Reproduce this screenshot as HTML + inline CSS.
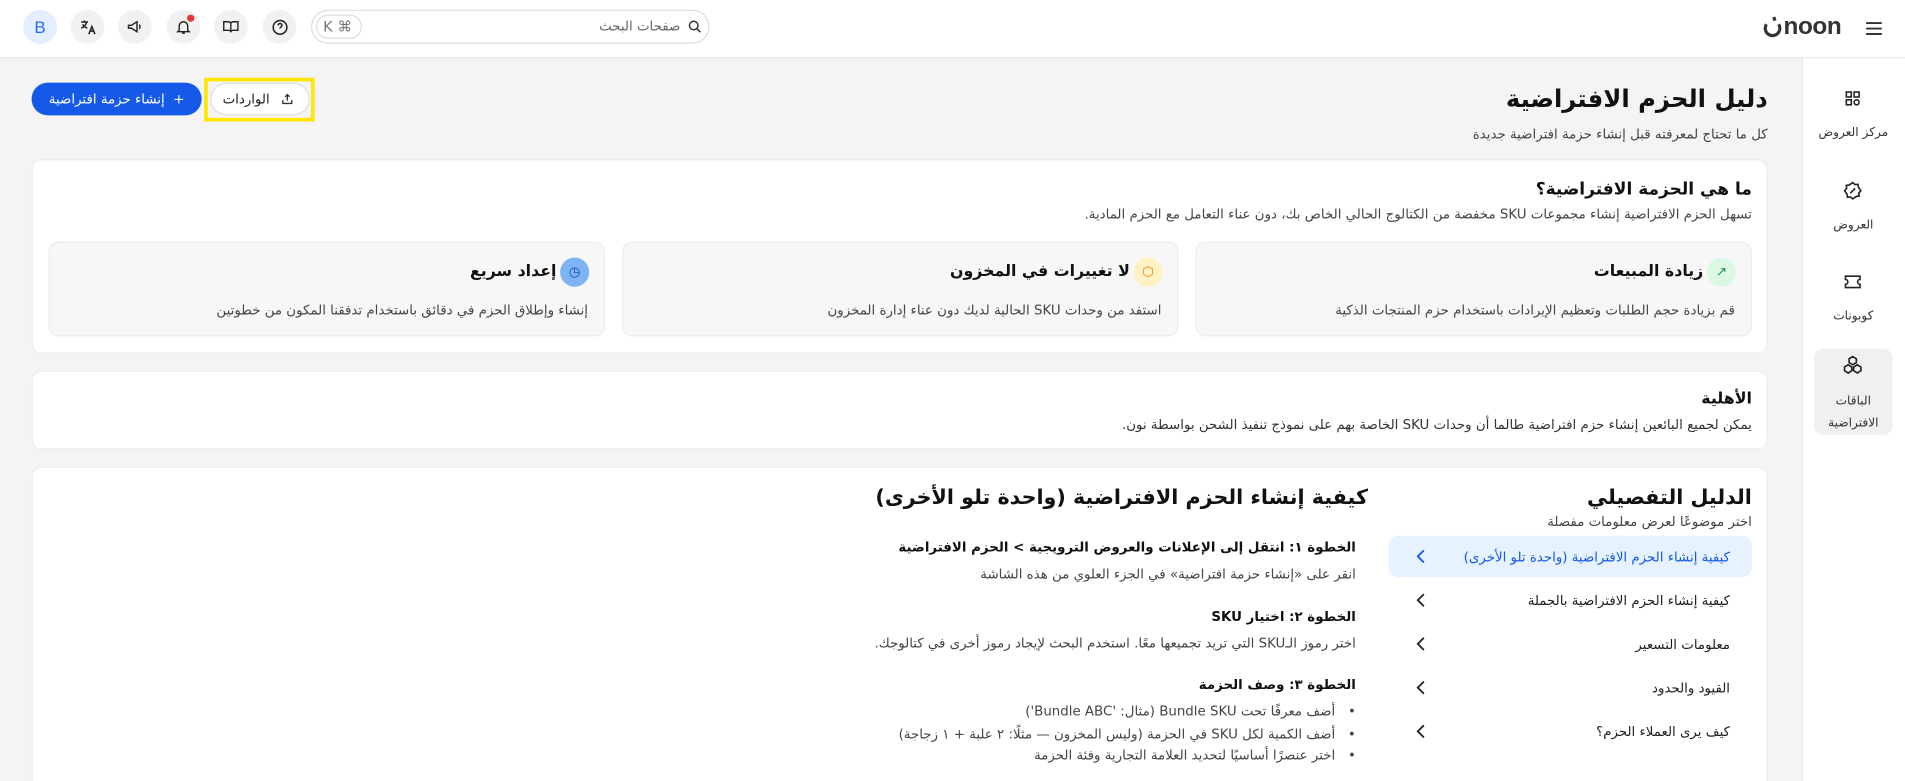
<!DOCTYPE html>
<html><head><meta charset="utf-8"><style>
*{box-sizing:border-box;margin:0;padding:0}
html,body{width:1905px;height:781px;overflow:hidden;background:#fff}
#w{width:1568px;height:643px;transform:scale(1.2149);transform-origin:0 0;position:relative;font-family:"DejaVu Sans","Liberation Sans",sans-serif;color:#1f1f1f}
.a{position:absolute}
.r{direction:rtl;text-align:right;white-space:nowrap}
.hdr{left:0;top:0;width:1568px;height:48px;background:#fff;border-bottom:1px solid #e6e6e6}
.ic{width:28px;height:28px;border-radius:50%;background:#f1f1f1;top:8px;display:flex;align-items:center;justify-content:center}
.main{left:0;top:48px;width:1483px;height:595px;background:#f4f4f4}
.side{left:1483px;top:48px;width:85px;height:595px;background:#fff;border-left:1px solid #e6e6e6}
.card{background:#fff;border:1px solid #ececec;border-radius:8px}
.fb{background:#f7f7f7;border:1px solid #ececec;border-radius:8px;top:199px;width:458px;height:78px}
.t{font-size:11px;color:#444}
.b{font-weight:bold;color:#111}
.sl{font-size:10px;color:#333;text-align:center;width:85px;left:1483px;direction:rtl}
.li{left:1143px;width:299px;height:34px;border-radius:8px;font-size:11px;direction:rtl;padding-right:18px;display:flex;align-items:center}
.li span{flex:1}
.chev{width:30px;display:flex;align-items:center}
</style></head><body><div id="w">
<div class="a hdr"></div>
<div class="a ic" style="left:19px;background:#e3efff;color:#2c6be6;font-size:14px;font-family:'Liberation Sans'">B</div>
<div class="a ic" style="left:58px"><svg width="15" height="15" viewBox="0 0 24 24" fill="none" stroke="#222" stroke-width="2"><path d="M3 5h9M7 3v2M10 5c-1 4-4 7-7 8M5 8c1 2 3 4 6 5M13 21l4-10 4 10M14.5 17h5"/></svg></div>
<div class="a ic" style="left:97px"><svg width="14" height="14" viewBox="0 0 24 24" fill="none" stroke="#222" stroke-width="2"><path d="M3 10v4h4l8 5V5L7 10z"/><path d="M18 9a4 4 0 010 6"/></svg></div>
<div class="a ic" style="left:137px"><svg width="14" height="14" viewBox="0 0 24 24" fill="none" stroke="#222" stroke-width="2"><path d="M6 17V11a6 6 0 0112 0v6l2 2H4z"/><path d="M10 21h4"/></svg><div class="a" style="width:6px;height:6px;border-radius:50%;background:#e53935;top:4px;right:5px"></div></div>
<div class="a ic" style="left:176px"><svg width="14" height="14" viewBox="0 0 24 24" fill="none" stroke="#222" stroke-width="2"><path d="M2 5h7a3 3 0 013 3v12a3 3 0 00-3-3H2zM22 5h-7a3 3 0 00-3 3v12a3 3 0 013-3h7z"/></svg></div>
<div class="a ic" style="left:216px"><svg width="15" height="15" viewBox="0 0 24 24" fill="none" stroke="#222" stroke-width="2"><circle cx="12" cy="12" r="9"/><path d="M9.5 9.5a2.5 2.5 0 015 0c0 2-2.5 2-2.5 4M12 17h.01"/></svg></div>
<div class="a" style="left:256px;top:8px;width:328px;height:28px;border:1px solid #ddd;border-radius:14px"></div>
<div class="a" style="left:260px;top:12px;width:38px;height:20px;border:1px solid #ddd;border-radius:10px;font-size:12px;color:#777;padding-left:5px;line-height:18px;font-family:'DejaVu Sans'">K ⌘</div>
<div class="a r t" style="right:1008px;top:15px;color:#666">صفحات البحث</div>
<svg class="a" style="left:566px;top:16px" width="12" height="12" viewBox="0 0 24 24" fill="none" stroke="#333" stroke-width="2.5"><circle cx="10" cy="10" r="7"/><path d="M15 15l6 6"/></svg>
<svg class="a" style="left:1451px;top:12px" width="16" height="20" viewBox="0 0 16 20" fill="none" stroke="#333" stroke-width="2.6"><path d="M3 8a6 6 0 1010 0"/><path d="M9 2l1 3"/></svg>
<div class="a" style="left:1468px;top:11px;font-size:20px;font-weight:bold;color:#333;font-family:'Liberation Sans';letter-spacing:-0.3px">noon</div>
<svg class="a" style="left:1536px;top:18px" width="13" height="11" viewBox="0 0 13 11" stroke="#333" stroke-width="1.6"><path d="M0 1h13M0 5.5h13M0 10h13"/></svg>

<div class="a main"></div>
<div class="a side"></div>
<svg class="a" style="left:1518px;top:74px" width="14" height="14" viewBox="0 0 24 24" fill="none" stroke="#222" stroke-width="2.2"><rect x="3" y="3" width="7" height="7"/><rect x="14" y="3" width="7" height="7"/><rect x="3" y="14" width="7" height="7"/><circle cx="17.5" cy="17.5" r="3.5"/></svg>
<div class="a sl" style="top:104px">مركز العروض</div>
<svg class="a" style="left:1517px;top:149px" width="16" height="16" viewBox="0 0 24 24" fill="none" stroke="#222" stroke-width="2"><path d="M12 2l3 2.5 3.5-.5.5 3.5L22 12l-2.5 3 .5 3.5-3.5.5L12 22l-3-2.5-3.5.5-.5-3.5L2 12l2.5-3-.5-3.5 3.5-.5z"/><path d="M9 15l6-6"/></svg>
<div class="a sl" style="top:180px">العروض</div>
<svg class="a" style="left:1517px;top:224px" width="16" height="16" viewBox="0 0 24 24" fill="none" stroke="#222" stroke-width="2"><path d="M3 5h18v4a3 3 0 000 6v4H3v-4a3 3 0 000-6z"/></svg>
<div class="a sl" style="top:255px">كوبونات</div>
<div class="a" style="left:1493px;top:287px;width:65px;height:71px;background:#f0f0f0;border-radius:8px"></div>
<svg class="a" style="left:1516px;top:292px" width="18" height="18" viewBox="0 0 24 24" fill="none" stroke="#222" stroke-width="1.8"><path d="M12 2l4 2.5v4L12 11 8 8.5v-4zM7 11l4 2.5v4L7 20l-4-2.5v-4zM17 11l4 2.5v4L17 20l-4-2.5v-4z"/></svg>
<div class="a sl" style="top:325px">الباقات</div>
<div class="a sl" style="top:343px">الافتراضية</div>

<div class="a r b" style="right:113px;top:69px;font-size:20px">دليل الحزم الافتراضية</div>
<div class="a r t" style="right:113px;top:104px">كل ما تحتاج لمعرفته قبل إنشاء حزمة افتراضية جديدة</div>
<div class="a" style="left:26px;top:68px;width:140px;height:27px;background:#1559e8;border-radius:14px;color:#fff;font-size:11px;direction:rtl;text-align:center;line-height:27px">+&nbsp; إنشاء حزمة افتراضية</div>
<div class="a" style="left:168px;top:64px;width:91px;height:36px;border:3px solid #ffe600"></div>
<div class="a" style="left:173px;top:68px;width:82px;height:27px;background:#fff;border:1px solid #ddd;border-radius:14px;font-size:11px;direction:rtl;line-height:25px;padding-right:32px">الواردات</div>
<svg class="a" style="left:231px;top:76px" width="11" height="11" viewBox="0 0 24 24" fill="none" stroke="#333" stroke-width="2.4"><path d="M12 15V4M8 8l4-4 4 4M4 14v6h16v-6"/></svg>

<div class="a card" style="left:26px;top:131px;width:1429px;height:160px"></div>
<div class="a r b" style="right:126px;top:148px;font-size:14px">ما هي الحزمة الافتراضية؟</div>
<div class="a r t" style="right:126px;top:170px">تسهل الحزم الافتراضية إنشاء مجموعات SKU مخفضة من الكتالوج الحالي الخاص بك، دون عناء التعامل مع الحزم المادية.</div>
<div class="a fb" style="left:984px"></div><div class="a fb" style="left:512px"></div><div class="a fb" style="left:40px"></div>
<div class="a" style="left:1405px;top:212px;width:24px;height:24px;border-radius:50%;background:#dcf7e3;color:#1a9c4a;font-size:11px;text-align:center;line-height:24px">↗</div>
<div class="a" style="left:933px;top:212px;width:24px;height:24px;border-radius:50%;background:#fff1c4;color:#e58a00;font-size:11px;text-align:center;line-height:24px">⬡</div>
<div class="a" style="left:461px;top:212px;width:24px;height:24px;border-radius:50%;background:#7eb4f5;color:#1a4aa8;font-size:11px;text-align:center;line-height:24px">◷</div>
<div class="a r b" style="right:166px;top:216px;font-size:13px">زيادة المبيعات</div>
<div class="a r t" style="right:140px;top:249px">قم بزيادة حجم الطلبات وتعظيم الإيرادات باستخدام حزم المنتجات الذكية</div>
<div class="a r b" style="right:638px;top:216px;font-size:13px">لا تغييرات في المخزون</div>
<div class="a r t" style="right:612px;top:249px">استفد من وحدات SKU الحالية لديك دون عناء إدارة المخزون</div>
<div class="a r b" style="right:1110px;top:216px;font-size:13px">إعداد سريع</div>
<div class="a r t" style="right:1084px;top:249px">إنشاء وإطلاق الحزم في دقائق باستخدام تدفقنا المكون من خطوتين</div>

<div class="a card" style="left:26px;top:305px;width:1429px;height:65px"></div>
<div class="a r b" style="right:126px;top:321px;font-size:13px">الأهلية</div>
<div class="a r t" style="right:126px;top:343px;color:#333">يمكن لجميع البائعين إنشاء حزم افتراضية طالما أن وحدات SKU الخاصة بهم على نموذج تنفيذ الشحن بواسطة نون.</div>

<div class="a card" style="left:26px;top:384px;width:1429px;height:270px"></div>
<div class="a r b" style="right:126px;top:400px;font-size:17px">الدليل التفصيلي</div>
<div class="a r t" style="right:126px;top:423px">اختر موضوعًا لعرض معلومات مفصلة</div>
<div class="a li" style="top:441px;background:#e6f2ff;color:#1559e8"><span>كيفية إنشاء الحزم الافتراضية (واحدة تلو الأخرى)</span><div class="chev"><svg width="8" height="12" viewBox="0 0 8 12" fill="none" stroke="#1559e8" stroke-width="1.5"><path d="M7 1L2 6l5 5"/></svg></div></div>
<div class="a li" style="top:477px"><span>كيفية إنشاء الحزم الافتراضية بالجملة</span><div class="chev"><svg width="8" height="12" viewBox="0 0 8 12" fill="none" stroke="#222" stroke-width="1.5"><path d="M7 1L2 6l5 5"/></svg></div></div>
<div class="a li" style="top:513px"><span>معلومات التسعير</span><div class="chev"><svg width="8" height="12" viewBox="0 0 8 12" fill="none" stroke="#222" stroke-width="1.5"><path d="M7 1L2 6l5 5"/></svg></div></div>
<div class="a li" style="top:549px"><span>القيود والحدود</span><div class="chev"><svg width="8" height="12" viewBox="0 0 8 12" fill="none" stroke="#222" stroke-width="1.5"><path d="M7 1L2 6l5 5"/></svg></div></div>
<div class="a li" style="top:585px"><span>كيف يرى العملاء الحزم؟</span><div class="chev"><svg width="8" height="12" viewBox="0 0 8 12" fill="none" stroke="#222" stroke-width="1.5"><path d="M7 1L2 6l5 5"/></svg></div></div>

<div class="a r b" style="right:442px;top:400px;font-size:17px">كيفية إنشاء الحزم الافتراضية (واحدة تلو الأخرى)</div>
<div class="a r b" style="right:452px;top:444px;font-size:11px">الخطوة ١: انتقل إلى الإعلانات والعروض الترويجية &gt; الحزم الافتراضية</div>
<div class="a r t" style="right:452px;top:466px">انقر على «إنشاء حزمة افتراضية» في الجزء العلوي من هذه الشاشة</div>
<div class="a r b" style="right:452px;top:501px;font-size:11px">الخطوة ٢: اختيار SKU</div>
<div class="a r t" style="right:452px;top:523px">اختر رموز الـSKU التي تريد تجميعها معًا. استخدم البحث لإيجاد رموز أخرى في كتالوجك.</div>
<div class="a r b" style="right:452px;top:557px;font-size:11px">الخطوة ٣: وصف الحزمة</div>
<div class="a r t" style="right:452px;top:579px">•&nbsp;&nbsp; أضف معرفًا تحت Bundle SKU (مثال: 'Bundle ABC')</div>
<div class="a r t" style="right:452px;top:598px">•&nbsp;&nbsp; أضف الكمية لكل SKU في الحزمة (وليس المخزون — مثلًا: ٢ علبة + ١ زجاجة)</div>
<div class="a r t" style="right:452px;top:615px">•&nbsp;&nbsp; اختر عنصرًا أساسيًا لتحديد العلامة التجارية وفئة الحزمة</div>
</div></body></html>
